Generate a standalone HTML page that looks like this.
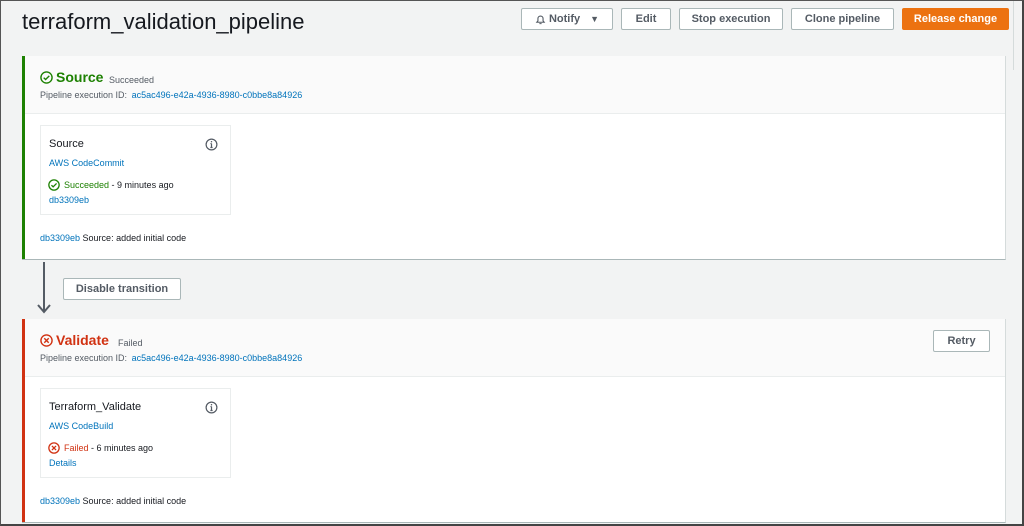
<!DOCTYPE html>
<html><head><style>
*{margin:0;padding:0;box-sizing:border-box}
body{width:1024px;height:526px;background:#f2f3f3;font-family:"Liberation Sans",sans-serif;position:relative;overflow:hidden;color:#16191f}
.frame{position:absolute;left:0;top:0;width:1024px;height:526px;border:1px solid #555;border-bottom:2px solid #444;border-right:2px solid #444;pointer-events:none;z-index:5}
.a{position:absolute;white-space:nowrap}
h1{position:absolute;left:22px;top:9px;font-size:22px;font-weight:normal;color:#16191f}
.btn{position:absolute;top:8px;height:22px;border:1px solid #aab7b8;background:#fff;font-size:11px;font-weight:bold;color:#545b64;display:flex;align-items:center;justify-content:center;border-radius:2px}
.stage{position:absolute;left:22px;width:984px;background:#fff;border-right:1px solid #d5dbdb;border-bottom:1px solid #aab7b8}
.stage .hd{background:#fafafa;height:58px;border-bottom:1px solid #eaeded}
.bar{position:absolute;left:0;top:0;bottom:0;width:3px}
.card{position:absolute;left:18px;width:191px;height:90px;border:1px solid #eaeded;background:#fff}
.lnk{color:#0073bb}
.s9{font-size:9px}
</style></head><body>
<div class="frame"></div>
<div class="a" style="left:1013px;top:0;width:1px;height:70px;background:#d5dbdb"></div>
<h1>terraform_validation_pipeline</h1>
<div class="btn" style="left:521px;width:92px"><svg width="11" height="11" viewBox="0 0 12 12" style="margin-right:3px"><path d="M2 9h8l-1.2-1.5V5a2.8 2.8 0 0 0-5.6 0v2.5zM4.8 10.5h2.4" fill="none" stroke="#545b64" stroke-width="1.2"/></svg>Notify<span style="margin-left:10px;font-size:9px">▼</span></div>
<div class="btn" style="left:621px;width:50px">Edit</div>
<div class="btn" style="left:679px;width:104px">Stop execution</div>
<div class="btn" style="left:791px;width:103px">Clone pipeline</div>
<div class="btn" style="left:902px;width:107px;background:#ec7211;border-color:#ec7211;color:#fff">Release change</div>

<div class="stage" style="top:56px;height:204px">
<div class="bar" style="background:#1d8102"></div>
<div class="hd"></div>
<svg class="a" style="left:18px;top:15px" width="13" height="13" viewBox="0 0 14 14"><circle cx="7" cy="7" r="6" fill="none" stroke="#1d8102" stroke-width="1.5"/><path d="M4 7.2l2 2 4-4" fill="none" stroke="#1d8102" stroke-width="1.5"/></svg>
<div class="a" style="left:34px;top:13px;font-size:14px;font-weight:bold;color:#1d8102">Source</div>
<div class="a s9" style="left:87px;top:19px;color:#545b64">Succeeded</div>
<div class="a s9" style="left:18px;top:34px;color:#545b64">Pipeline execution ID: <span class="lnk" style="margin-left:2px">ac5ac496-e42a-4936-8980-c0bbe8a84926</span></div>
<div class="card" style="top:69px">
<div class="a" style="left:8px;top:12px;font-size:11px">Source</div>
<svg class="a" style="left:164px;top:12px" width="13" height="13" viewBox="0 0 14 14"><circle cx="7" cy="7" r="5.8" fill="none" stroke="#545b64" stroke-width="1.3"/><path d="M7 6v4.2M5.8 10.2h2.4M5.9 6h1.1" stroke="#545b64" stroke-width="1.3" fill="none"/><circle cx="7" cy="4" r=".8" fill="#545b64"/></svg>
<div class="a s9 lnk" style="left:8px;top:32px">AWS CodeCommit</div>
<svg class="a" style="left:7px;top:53px" width="12" height="12" viewBox="0 0 14 14"><circle cx="7" cy="7" r="6" fill="none" stroke="#1d8102" stroke-width="1.5"/><path d="M4 7.2l2 2 4-4" fill="none" stroke="#1d8102" stroke-width="1.5"/></svg>
<div class="a s9" style="left:23px;top:54px"><span style="color:#1d8102">Succeeded</span> - 9 minutes ago</div>
<div class="a s9 lnk" style="left:8px;top:69px">db3309eb</div>
</div>
<div class="a s9" style="left:18px;top:177px"><span class="lnk">db3309eb</span> Source: added initial code</div>
</div>

<div class="a" style="left:43px;top:262px;width:2px;height:50px;background:#545b64"></div>
<svg class="a" style="left:37px;top:302px" width="14" height="12" viewBox="0 0 14 12"><path d="M1 3l6 7 6-7" fill="none" stroke="#545b64" stroke-width="2"/></svg>
<div class="btn" style="left:63px;top:278px;width:118px;font-size:11px">Disable transition</div>

<div class="stage" style="top:319px;height:204px">
<div class="bar" style="background:#d13212"></div>
<div class="hd"></div>
<svg class="a" style="left:18px;top:15px" width="13" height="13" viewBox="0 0 14 14"><circle cx="7" cy="7" r="6" fill="none" stroke="#d13212" stroke-width="1.5"/><path d="M4.6 4.6l4.8 4.8M9.4 4.6l-4.8 4.8" stroke="#d13212" stroke-width="1.5"/></svg>
<div class="a" style="left:34px;top:13px;font-size:14px;font-weight:bold;color:#d13212">Validate</div>
<div class="a s9" style="left:96px;top:19px;color:#545b64">Failed</div>
<div class="a s9" style="left:18px;top:34px;color:#545b64">Pipeline execution ID: <span class="lnk" style="margin-left:2px">ac5ac496-e42a-4936-8980-c0bbe8a84926</span></div>
<div class="btn" style="left:911px;top:11px;width:57px">Retry</div>
<div class="card" style="top:69px">
<div class="a" style="left:8px;top:12px;font-size:11px">Terraform_Validate</div>
<svg class="a" style="left:164px;top:12px" width="13" height="13" viewBox="0 0 14 14"><circle cx="7" cy="7" r="5.8" fill="none" stroke="#545b64" stroke-width="1.3"/><path d="M7 6v4.2M5.8 10.2h2.4M5.9 6h1.1" stroke="#545b64" stroke-width="1.3" fill="none"/><circle cx="7" cy="4" r=".8" fill="#545b64"/></svg>
<div class="a s9 lnk" style="left:8px;top:32px">AWS CodeBuild</div>
<svg class="a" style="left:7px;top:53px" width="12" height="12" viewBox="0 0 14 14"><circle cx="7" cy="7" r="6" fill="none" stroke="#d13212" stroke-width="1.5"/><path d="M4.6 4.6l4.8 4.8M9.4 4.6l-4.8 4.8" stroke="#d13212" stroke-width="1.5"/></svg>
<div class="a s9" style="left:23px;top:54px"><span style="color:#d13212">Failed</span> - 6 minutes ago</div>
<div class="a s9 lnk" style="left:8px;top:69px">Details</div>
</div>
<div class="a s9" style="left:18px;top:177px"><span class="lnk">db3309eb</span> Source: added initial code</div>
</div>
</body></html>
